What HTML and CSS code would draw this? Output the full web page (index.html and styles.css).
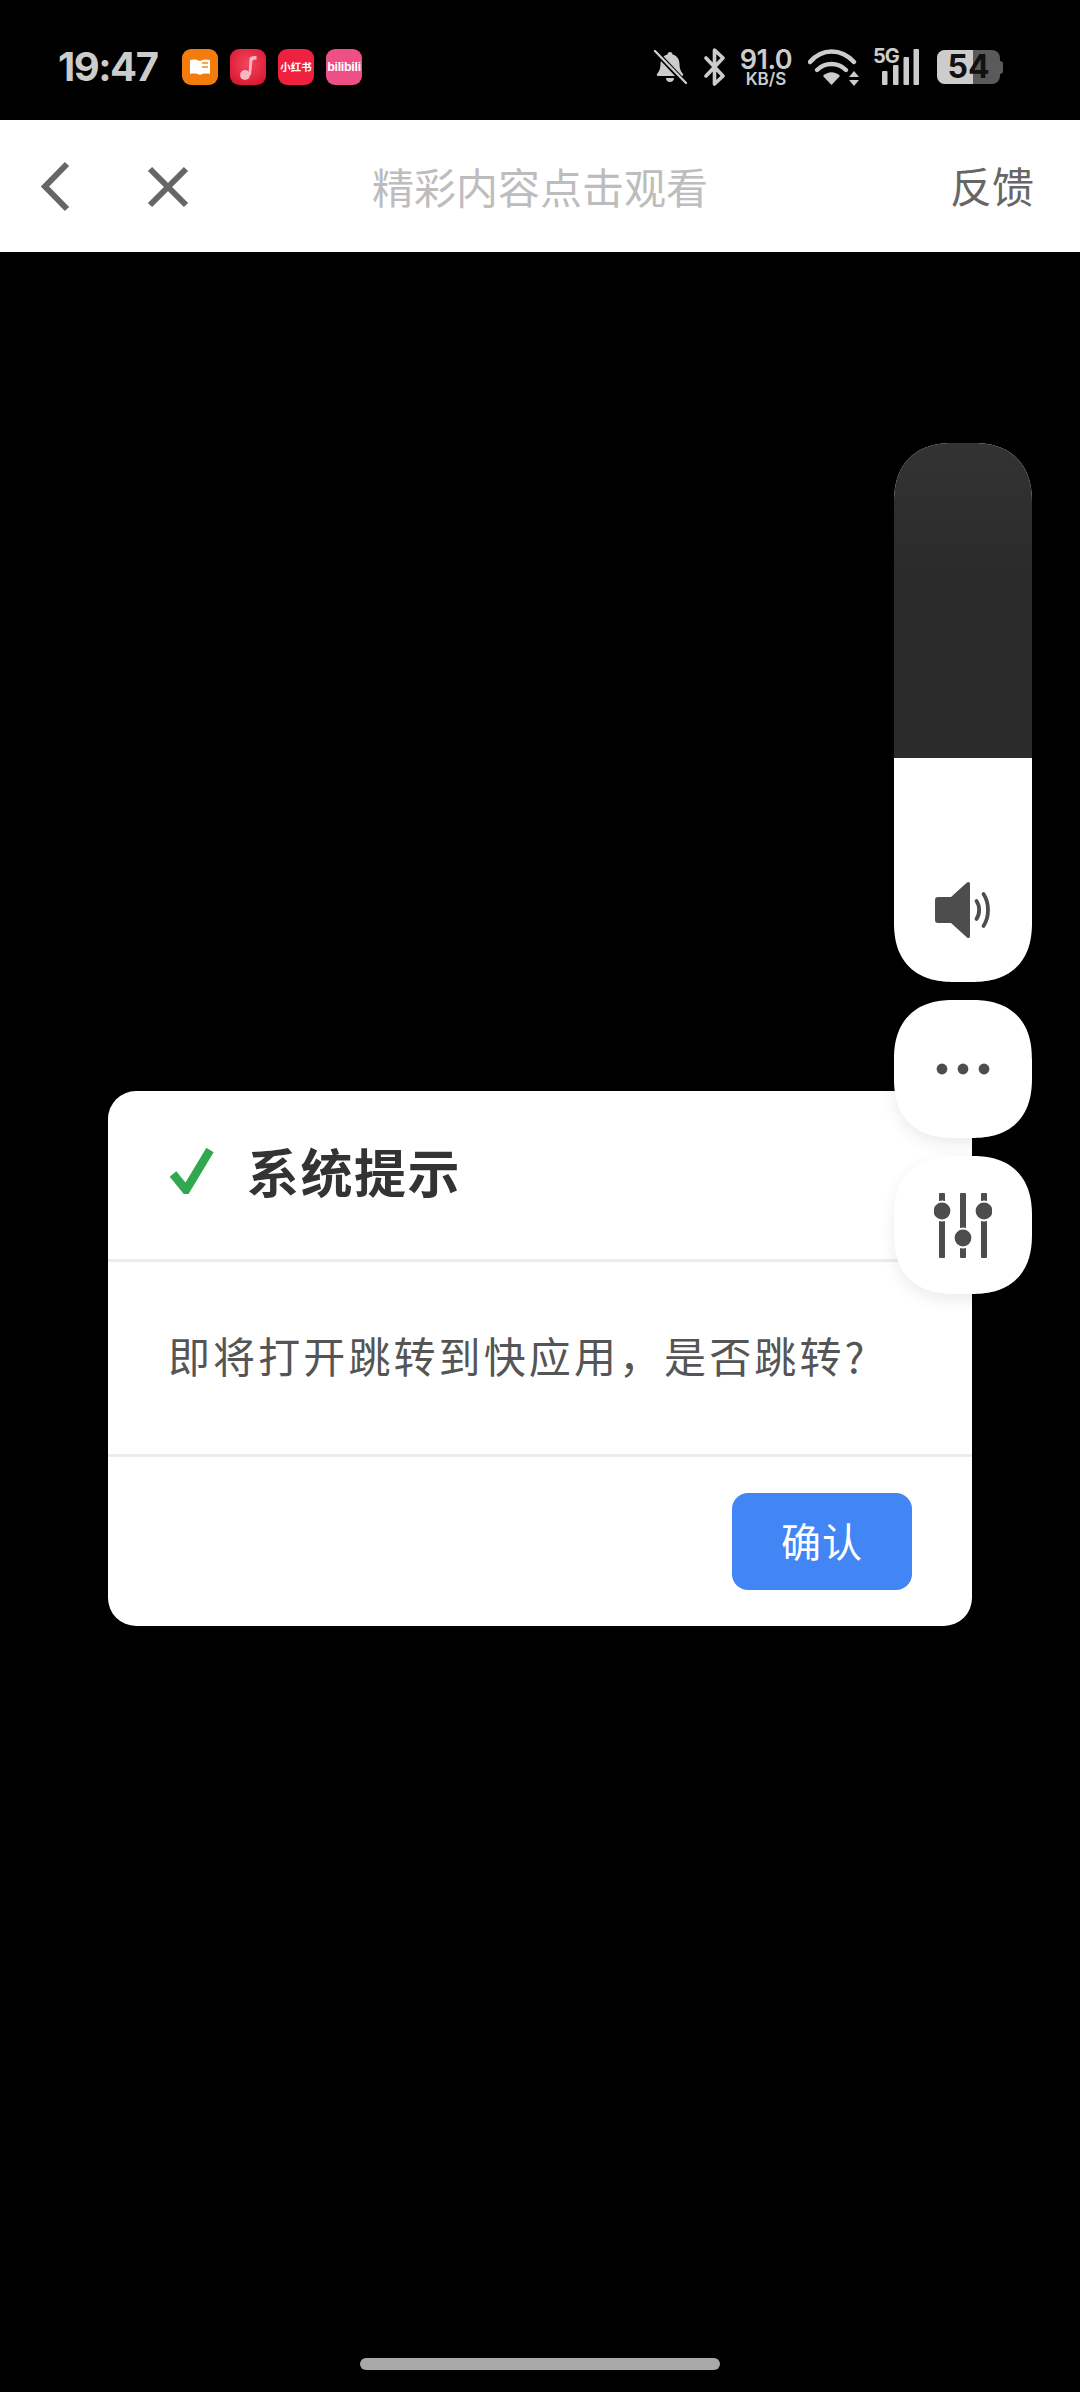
FILE: index.html
```html
<!DOCTYPE html>
<html lang="zh">
<head>
<meta charset="utf-8">
<title>系统提示</title>
<link rel="stylesheet" href="styles.css">
</head>
<body>
<header class="status">
  <div class="status-left">
    <span class="time">19:47</span>
    <div class="apps">
      <span class="app app-book">
        <svg viewBox="0 0 36 36" class="app-svg"><path d="M8 11c4-1 7-.5 10 1 3-1.500 6-2 10-1v14c-4-.8-7-.4-10 1-3-1.400-6-1.800-10-1z" fill="#fff"/><path d="M20 14h6M20 18h6" stroke="#f08a1c" stroke-width="1.500"/></svg>
      </span>
      <span class="app app-music">
        <svg viewBox="0 0 36 36" class="app-svg"><circle cx="15" cy="26" r="5" fill="#fbb6c0"/><path d="M18.500 26 L19.500 10c.3-2 2-3 7-3v3.500c-3 0-4 .5-4.200 2L21 26z" fill="#fbb6c0"/></svg>
      </span>
      <span class="app app-red"><span class="app-label">小红书</span></span>
      <span class="app app-bili"><span class="app-label app-label-bili">bilibili</span></span>
    </div>
  </div>
  <div class="status-right">
    <svg class="ic-bell" viewBox="0 0 36 36"><path d="M18 3c1.600 0 2.400 1 2.600 2.400 4.400 1.200 6.900 5 6.900 9.600 0 4 .9 7 3.500 10 .6.800.1 2-1 2H6c-1.100 0-1.600-1.200-1-2 2.600-3 3.500-6 3.500-10 0-4.600 2.500-8.400 6.900-9.600C15.600 4 16.400 3 18 3z" fill="#ccc"/><path d="M14 29h8c0 2.500-1.800 4-4 4s-4-1.500-4-4z" fill="#ccc"/><path d="M2 1l32 34" stroke="#000" stroke-width="5"/><path d="M3 2l31 32" stroke="#ccc" stroke-width="2.400" stroke-linecap="round"/></svg>
    <svg class="ic-bt" viewBox="0 0 24 38"><path d="M3 10l17 18-8.500 8V2L20 10 3 28" fill="none" stroke="#ccc" stroke-width="3.600" stroke-linejoin="round" stroke-linecap="round"/></svg>
    <div class="speed"><span class="speed-num">91.0</span><span class="speed-unit">KB/S</span></div>
    <svg class="ic-wifi" viewBox="0 0 52 38"><g fill="none" stroke="#ccc" stroke-width="4.400" stroke-linecap="round"><path d="M2 14C14 0 33 0 46 14"/><path d="M9 22c8-8 21-8 29 0"/></g><path d="M15 28c5-5 12-5 17 0l-8.500 9z" fill="#ccc"/><path d="M46 23l-5 6h10zM46 38l-5-6h10z" fill="#ccc"/></svg>
    <div class="signal">
      <span class="sig-5g">5G</span>
      <svg class="sig-bars" viewBox="0 0 37 36"><rect x="0" y="22" width="5.500" height="14" rx="1" fill="#ccc"/><rect x="11" y="16" width="5.500" height="20" rx="1" fill="#ccc"/><rect x="21.500" y="8" width="5.500" height="28" rx="1" fill="#ccc"/><rect x="31.500" y="0" width="5.500" height="36" rx="1" fill="#ccc"/></svg>
    </div>
    <div class="battery">
      <div class="bat-body"><div class="bat-fill"></div><span class="bat-num">54</span></div>
      <span class="bat-cap"></span>
    </div>
  </div>
</header>

<nav class="navbar">
  <div class="nav-icons">
    <svg class="nav-back" viewBox="0 0 32 54"><path d="M27 4 L5 26.500 L27 49" fill="none" stroke="#666" stroke-width="6"/></svg>
    <svg class="nav-close" viewBox="0 0 42 42"><path d="M3 3L39 39M39 3L3 39" fill="none" stroke="#666" stroke-width="6"/></svg>
  </div>
  <span class="nav-title">精彩内容点击观看</span>
  <span class="nav-action">反馈</span>
</nav>

<main class="stage">
  <section class="dialog">
    <div class="dialog-head">
      <svg class="check" viewBox="0 0 46 46"><path d="M4 26 L17 42 L41 2" fill="none" stroke="#2fa84f" stroke-width="8.500"/></svg>
      <h1 class="dialog-title">系统提示</h1>
    </div>
    <p class="dialog-body">即将打开跳转到快应用，是否跳转?</p>
    <div class="dialog-foot"><button class="confirm">确认</button></div>
  </section>
</main>

<aside class="tools">
  <div class="tool tool-volume">
    <div class="vol-empty"></div>
    <div class="vol-fill">
      <svg class="ic-speaker" viewBox="0 0 56 58"><path d="M3 16h13L32 1.500c1.500-1.200 3-.5 3 1.500v52c0 2-1.500 2.700-3 1.500L16 42H3c-2 0-3-1-3-3V19c0-2 1-3 3-3z" fill="#4d4d4d"/><path d="M41.500 20c3.500 5 3.500 13 0 18M48.500 13c6 9 6 23 0 32" fill="none" stroke="#4d4d4d" stroke-width="3.800" stroke-linecap="round"/></svg>
    </div>
  </div>
  <div class="tool tool-btn">
    <svg class="ic-dots" viewBox="0 0 54 12"><circle cx="6" cy="6" r="5.400" fill="#4d4d4d"/><circle cx="27" cy="6" r="5.400" fill="#4d4d4d"/><circle cx="48" cy="6" r="5.400" fill="#4d4d4d"/></svg>
  </div>
  <div class="tool tool-btn">
    <svg class="ic-mixer" viewBox="0 0 58 65"><g fill="#4d4d4d"><rect x="5" y="0" width="6" height="65" rx="1"/><rect x="26" y="0" width="6" height="65" rx="1"/><rect x="47" y="0" width="6" height="65" rx="1"/></g><g stroke="#fff" stroke-width="4" paint-order="stroke" fill="#4d4d4d"><circle cx="8" cy="18" r="8.400"/><circle cx="50" cy="18" r="8.400"/><circle cx="29" cy="45" r="8.400"/></g></svg>
  </div>
</aside>

<div class="home-bar"></div>
</body>
</html>
```

FILE: styles.css
```css
* { box-sizing: border-box; }
html, body { margin: 0; padding: 0; }
body {
  width: 1080px;
  height: 2392px;
  background: #000;
  position: relative;
  overflow: hidden;
  display: flex;
  flex-direction: column;
  font-family: "Noto Sans CJK SC", "Noto Sans", sans-serif;
}

/* status bar */
.status {
  height: 120px;
  padding: 14px 77px 0 58px;
  display: flex;
  align-items: center;
  justify-content: space-between;
  color: #ccc;
}
.status-left { display: flex; align-items: center; gap: 24px; }
.time {
  font-family: Inter, Roboto, sans-serif;
  font-weight: 700;
  font-size: 40px;
  line-height: 1;
  letter-spacing: -1.500px;
  width: 100px;
}
.apps { display: flex; gap: 12px; }
.app {
  width: 36px;
  height: 36px;
  border-radius: 9px;
  display: flex;
  align-items: center;
  justify-content: center;
  overflow: hidden;
}
.app-svg { width: 36px; height: 36px; display: block; }
.app-book { background: #f47c0c; }
.app-music { background: radial-gradient(circle at 50% 40%, #f4475b, #d30d2c); }
.app-red { background: #f0213f; }
.app-bili { background: #ee4f86; }
.app-label {
  color: #fff;
  font-size: 10.500px;
  font-weight: 700;
  line-height: 1;
  white-space: nowrap;
}
.app-label-bili {
  font-family: "Liberation Sans", sans-serif;
  font-size: 12.500px;
  letter-spacing: -0.3px;
}
.status-right { display: flex; align-items: center; }
.ic-bell { width: 36px; height: 36px; margin-right: 15px; display: block; }
.ic-bt { width: 24px; height: 38px; margin-right: 13px; display: block; }
.speed {
  width: 52px;
  margin-right: 16px;
  display: flex;
  flex-direction: column;
  align-items: center;
  font-family: Inter, Roboto, sans-serif;
  font-weight: 600;
}
.speed-num { font-size: 27px; line-height: 23px; letter-spacing: -0.5px; white-space: nowrap; }
.speed-unit { font-size: 17px; line-height: 13px; margin-top: 2px; white-space: nowrap; }
.ic-wifi { width: 52px; height: 38px; margin-right: 13px; display: block; }
.signal { position: relative; width: 46px; height: 38px; margin-right: 18px; }
.sig-5g {
  position: absolute;
  left: 0;
  top: -2px;
  font-family: Inter, Roboto, sans-serif;
  font-weight: 700;
  font-size: 20px;
  line-height: 1;
  letter-spacing: -1px;
}
.sig-bars { position: absolute; right: 0; top: 1px; width: 37px; height: 36px; }
.battery { display: flex; align-items: center; }
.bat-body {
  position: relative;
  width: 63px;
  height: 34px;
  background: #5a5a5a;
  border-radius: 8px;
  display: flex;
  align-items: center;
  justify-content: center;
}
.bat-fill {
  position: absolute;
  left: 0;
  top: 0;
  bottom: 0;
  width: 36px;
  background: #ccc;
  border-radius: 8px 0 0 8px;
}
.bat-num {
  position: relative;
  font-family: Inter, Roboto, sans-serif;
  font-weight: 700;
  font-size: 32px;
  line-height: 1;
  color: #111;
}
.bat-cap { width: 3px; height: 13px; background: #5a5a5a; border-radius: 0 3px 3px 0; }

/* nav */
.navbar {
  height: 132px;
  background: #fff;
  position: relative;
  display: flex;
  align-items: center;
  justify-content: center;
  font-size: 42px;
  line-height: 1;
}
.nav-icons {
  position: absolute;
  left: 40px;
  top: 40px;
  display: flex;
  align-items: center;
  gap: 75px;
}
.nav-back { width: 32px; height: 54px; display: block; }
.nav-close { width: 42px; height: 42px; display: block; }
.nav-title { color: #bdbdbd; }
.nav-action { position: absolute; right: 46px; top: 44px; color: #666; }

/* dialog */
.stage { flex: 1; padding: 839px 108px 0; }
.dialog {
  width: 864px;
  height: 535px;
  background: #fff;
  border-radius: 28px;
  display: flex;
  flex-direction: column;
}
.dialog-head {
  height: 171px;
  border-bottom: 3px solid #ececec;
  padding: 0 0 9px 61px;
  display: flex;
  align-items: center;
  gap: 32px;
}
.check { width: 46px; height: 46px; display: block; }
.dialog-title {
  margin: 0;
  font-size: 52px;
  font-weight: 700;
  line-height: 1;
  letter-spacing: 1.500px;
  color: #333;
}
.dialog-body {
  margin: 0;
  height: 195px;
  border-bottom: 3px solid #ececec;
  padding: 0 0 6px 60px;
  display: flex;
  align-items: center;
  font-size: 42px;
  line-height: 1;
  letter-spacing: 3.100px;
  color: #555;
}
.dialog-foot {
  flex: 1;
  display: flex;
  justify-content: flex-end;
  align-items: flex-start;
  padding: 36px 60px 0 0;
}
.confirm {
  width: 180px;
  height: 97px;
  padding: 0 0 4px;
  border: 0;
  border-radius: 16px;
  background: #4285f4;
  color: #fff;
  font-family: inherit;
  font-size: 40px;
  line-height: 1;
  letter-spacing: 1px;
}

/* floating tools */
.tools {
  position: absolute;
  left: 894px;
  top: 443px;
  width: 138px;
  display: flex;
  flex-direction: column;
  gap: 18px;
}
.tool {
  width: 138px;
  border-radius: 60px;
  corner-shape: superellipse(1.250);
  overflow: hidden;
  background: #fff;
  box-shadow: 0 6px 16px rgba(0, 0, 0, 0.08);
}
.tool-volume { height: 539px; display: flex; flex-direction: column; }
.vol-empty { height: 315px; background: linear-gradient(#333, #2b2b2b 40%); }
.vol-fill {
  flex: 1;
  display: flex;
  justify-content: center;
  padding-top: 123px;
}
.ic-speaker { width: 56px; height: 58px; display: block; }
.tool-btn { height: 138px; display: flex; align-items: center; justify-content: center; }
.ic-dots { width: 54px; height: 12px; display: block; }
.ic-mixer { width: 58px; height: 65px; display: block; }

/* home indicator */
.home-bar {
  position: absolute;
  left: 360px;
  top: 2358px;
  width: 360px;
  height: 12px;
  border-radius: 6px;
  background: #a9a9a9;
}
```
